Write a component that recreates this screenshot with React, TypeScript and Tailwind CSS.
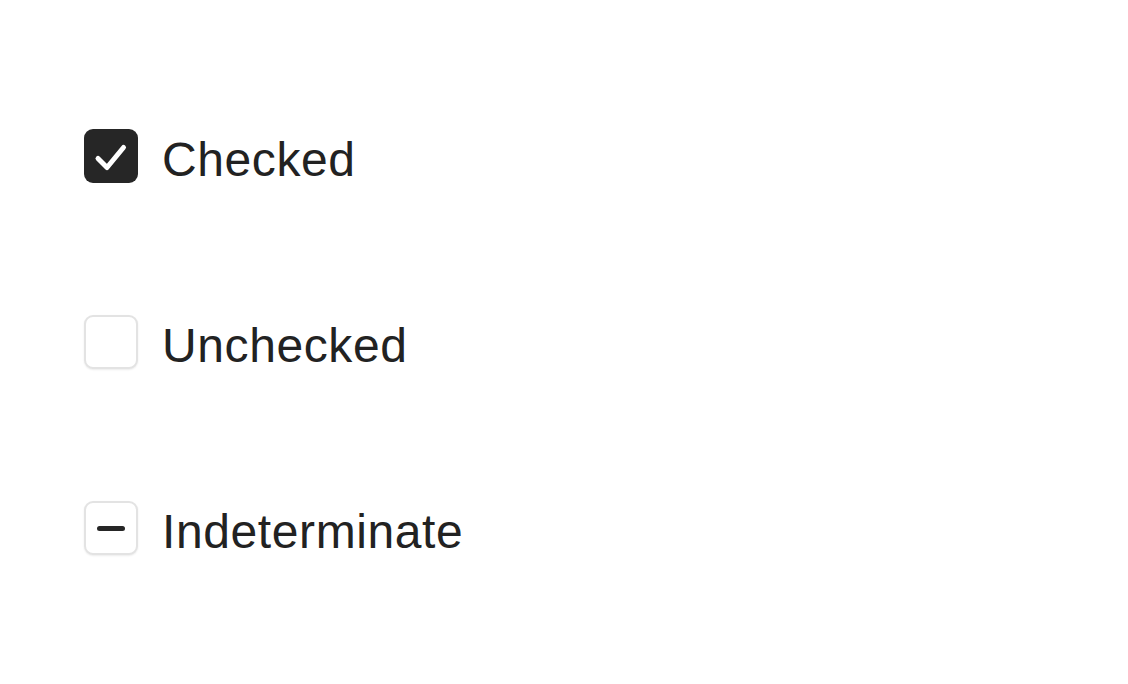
import React from "react";

function Box({ kind }: { kind: "checked" | "unchecked" | "indeterminate" }) {
  if (kind === "checked") {
    return (
      <div className="w-[54px] h-[54px] rounded-[9px] bg-[#262626] flex items-center justify-center shrink-0">
        <svg width="54" height="54" viewBox="0 0 54 54" fill="none">
          <path d="M14 29.5 L23 38.5 L39.5 18.5" stroke="white" strokeWidth="5" strokeLinecap="round" strokeLinejoin="round" />
        </svg>
      </div>
    );
  }
  return (
    <div className="w-[54px] h-[54px] rounded-[9px] bg-white border-2 border-[#e3e3e3] shadow-[0_1px_2px_rgba(0,0,0,0.08)] flex items-center justify-center shrink-0">
      {kind === "indeterminate" && <div className="w-[28px] h-[5px] rounded-full bg-[#262626]" />}
    </div>
  );
}

export default function App() {
  const rows: { kind: "checked" | "unchecked" | "indeterminate"; label: string }[] = [
    { kind: "checked", label: "Checked" },
    { kind: "unchecked", label: "Unchecked" },
    { kind: "indeterminate", label: "Indeterminate" },
  ];
  return (
    <div className="w-[1128px] h-[684px] bg-white flex flex-col pl-[84px] pt-[129px] gap-[132px]" style={{ fontFamily: '"Liberation Sans", Arial, sans-serif' }}>
      {rows.map((r) => (
        <div key={r.label} className="flex items-center h-[54px] gap-[24px]">
          <Box kind={r.kind} />
          <span className="text-[48px] leading-none pt-[8px] text-[#222222] tracking-[0.6px]">{r.label}</span>
        </div>
      ))}
    </div>
  );
}
